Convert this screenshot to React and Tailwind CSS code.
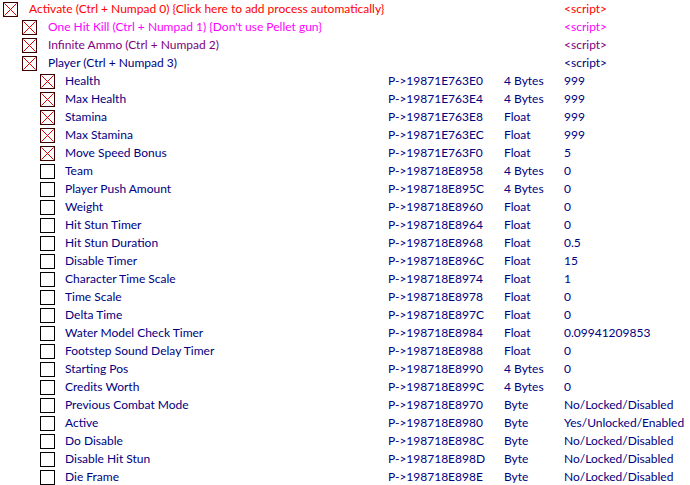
import React from "react";

const rows = [
  { lvl: 0, on: true, name: "Activate (Ctrl + Numpad 0) {Click here to add process automatically}", val: "<script>", color: "text-[#ff0000]" },
  { lvl: 1, on: true, name: "One Hit Kill (Ctrl + Numpad 1) {Don't use Pellet gun}", val: "<script>", color: "text-[#ff00ff]" },
  { lvl: 1, on: true, name: "Infinite Ammo (Ctrl + Numpad 2)", val: "<script>", color: "text-[#800080]" },
  { lvl: 1, on: true, name: "Player (Ctrl + Numpad 3)", val: "<script>", color: "text-[#000080]" },
  { lvl: 2, on: true, name: "Health", addr: "P->19871E763E0", type: "4 Bytes", val: "999" },
  { lvl: 2, on: true, name: "Max Health", addr: "P->19871E763E4", type: "4 Bytes", val: "999" },
  { lvl: 2, on: true, name: "Stamina", addr: "P->19871E763E8", type: "Float", val: "999" },
  { lvl: 2, on: true, name: "Max Stamina", addr: "P->19871E763EC", type: "Float", val: "999" },
  { lvl: 2, on: true, name: "Move Speed Bonus", addr: "P->19871E763F0", type: "Float", val: "5" },
  { lvl: 2, on: false, name: "Team", addr: "P->198718E8958", type: "4 Bytes", val: "0" },
  { lvl: 2, on: false, name: "Player Push Amount", addr: "P->198718E895C", type: "4 Bytes", val: "0" },
  { lvl: 2, on: false, name: "Weight", addr: "P->198718E8960", type: "Float", val: "0" },
  { lvl: 2, on: false, name: "Hit Stun Timer", addr: "P->198718E8964", type: "Float", val: "0" },
  { lvl: 2, on: false, name: "Hit Stun Duration", addr: "P->198718E8968", type: "Float", val: "0.5" },
  { lvl: 2, on: false, name: "Disable Timer", addr: "P->198718E896C", type: "Float", val: "15" },
  { lvl: 2, on: false, name: "Character Time Scale", addr: "P->198718E8974", type: "Float", val: "1" },
  { lvl: 2, on: false, name: "Time Scale", addr: "P->198718E8978", type: "Float", val: "0" },
  { lvl: 2, on: false, name: "Delta Time", addr: "P->198718E897C", type: "Float", val: "0" },
  { lvl: 2, on: false, name: "Water Model Check Timer", addr: "P->198718E8984", type: "Float", val: "0.09941209853" },
  { lvl: 2, on: false, name: "Footstep Sound Delay Timer", addr: "P->198718E8988", type: "Float", val: "0" },
  { lvl: 2, on: false, name: "Starting Pos", addr: "P->198718E8990", type: "4 Bytes", val: "0" },
  { lvl: 2, on: false, name: "Credits Worth", addr: "P->198718E899C", type: "4 Bytes", val: "0" },
  { lvl: 2, on: false, name: "Previous Combat Mode", addr: "P->198718E8970", type: "Byte", val: "No/Locked/Disabled" },
  { lvl: 2, on: false, name: "Active", addr: "P->198718E8980", type: "Byte", val: "Yes/Unlocked/Enabled" },
  { lvl: 2, on: false, name: "Do Disable", addr: "P->198718E898C", type: "Byte", val: "No/Locked/Disabled" },
  { lvl: 2, on: false, name: "Disable Hit Stun", addr: "P->198718E898D", type: "Byte", val: "No/Locked/Disabled" },
  { lvl: 2, on: false, name: "Die Frame", addr: "P->198718E898E", type: "Byte", val: "No/Locked/Disabled" },
];

const pad = ["pl-[3px]", "pl-[22px]", "pl-[40px]"];
const gap = ["mr-[11px]", "mr-[11px]", "mr-[10px]"];

function Box({ on }) {
  return (
    <div className={`w-[15px] h-[15px] shrink-0 border ${on ? "border-[#3a0000]" : "border-black"} bg-white`}>
      {on && (
        <svg width="13" height="13" viewBox="0 0 13 13" className="block">
          <path d="M0.5 0.5 L12.5 12.5 M12.5 0.5 L0.5 12.5" stroke="#e00000" strokeWidth="1" />
        </svg>
      )}
    </div>
  );
}

export default function App() {
  return (
    <div className="w-[690px] h-[485px] bg-white overflow-hidden text-[12px] leading-[18px] text-[#000080]" style={{ fontFamily: 'Lato, "Open Sans", sans-serif' }}>
      {rows.map((r, i) => (
        <div key={i} className={`flex items-center h-[18px] ${r.color || ""}`}>
          <div className={`w-[388px] shrink-0 flex items-center ${pad[r.lvl]}`}>
            <div className={gap[r.lvl]}><Box on={r.on} /></div>
            <span className="whitespace-nowrap">{r.name}</span>
          </div>
          <div className="w-[116px] shrink-0 whitespace-nowrap">{r.addr || ""}</div>
          <div className="w-[60px] shrink-0 whitespace-nowrap">{r.type || ""}</div>
          <div className="whitespace-nowrap">{r.val}</div>
        </div>
      ))}
    </div>
  );
}
